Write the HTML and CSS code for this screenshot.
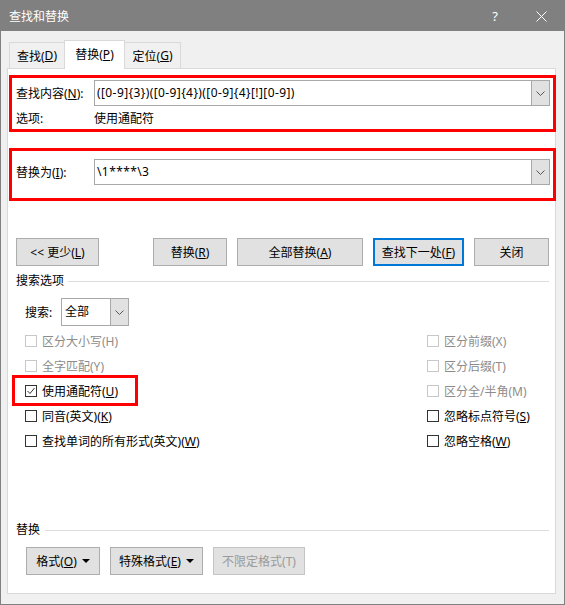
FILE: index.html
```html
<!DOCTYPE html>
<html lang="zh-CN">
<head>
    <meta charset="UTF-8">
    <title>查找和替换</title>
    <link rel="stylesheet" href="styles.css">
</head>
<body>
<div class="dialog">
    <div class="titlebar">
        <span class="title">查找和替换</span>
        <span class="title-btn help">?</span>
        <span class="title-btn">
            <svg width="11" height="11" viewBox="0 0 11 11"><path d="M0.5 0.5 L10.5 10.5 M10.5 0.5 L0.5 10.5" stroke="#fff" stroke-width="1" fill="none"/></svg>
        </span>
    </div>

    <div class="tabs">
        <div class="tab tab-find">查找(<u>D</u>)</div>
        <div class="tab tab-replace active">替换(<u>P</u>)</div>
        <div class="tab tab-goto">定位(<u>G</u>)</div>
    </div>

    <div class="panel">
        <div class="mark find-group">
            <div class="field-row">
                <span class="field-label">查找内容(<u>N</u>):</span>
                <div class="combo">
                    <span class="combo-text">([0-9]{3})([0-9]{4})([0-9]{4}[!][0-9])</span>
                    <span class="combo-btn">
                        <svg width="9" height="5" viewBox="0 0 9 5"><polyline points="0.5,0.5 4.5,4.5 8.5,0.5" stroke="#555" fill="none"/></svg>
                    </span>
                </div>
            </div>
            <div class="options-row">
                <span class="field-label">选项:</span>
                <span>使用通配符</span>
            </div>
        </div>

        <div class="mark replace-group">
            <div class="field-row">
                <span class="field-label">替换为(<u>I</u>):</span>
                <div class="combo">
                    <span class="combo-text">\1****\3</span>
                    <span class="combo-btn">
                        <svg width="9" height="5" viewBox="0 0 9 5"><polyline points="0.5,0.5 4.5,4.5 8.5,0.5" stroke="#555" fill="none"/></svg>
                    </span>
                </div>
            </div>
        </div>

        <div class="action-row">
            <button class="btn btn-more"><span>&lt;&lt; 更少(<u>L</u>)</span></button>
            <button class="btn btn-replace"><span>替换(<u>R</u>)</span></button>
            <button class="btn btn-all"><span>全部替换(<u>A</u>)</span></button>
            <button class="btn btn-next btn-default"><span>查找下一处(<u>F</u>)</span></button>
            <button class="btn btn-close"><span>关闭</span></button>
        </div>

        <div class="section-head">
            <span>搜索选项</span>
            <span class="rule"></span>
        </div>

        <div class="search-row">
            <span class="search-label">搜索:</span>
            <div class="select">
                <span class="select-text">全部</span>
                <span class="select-btn">
                    <svg width="9" height="5" viewBox="0 0 9 5"><polyline points="0.5,0.5 4.5,4.5 8.5,0.5" stroke="#555" fill="none"/></svg>
                </span>
            </div>
        </div>

        <div class="checks">
            <div class="check disabled"><span class="box"></span><span>区分大小写(H)</span></div>
            <div class="check disabled"><span class="box"></span><span>区分前缀(X)</span></div>

            <div class="check disabled"><span class="box"></span><span>全字匹配(Y)</span></div>
            <div class="check disabled"><span class="box"></span><span>区分后缀(T)</span></div>

            <div class="check marked">
                <span class="box">
                    <svg width="10" height="10" viewBox="0 0 10 10"><polyline points="1.5,5 4,7.5 8.5,2" stroke="#333" fill="none"/></svg>
                </span>
                <span>使用通配符(<u>U</u>)</span>
                <span class="mark-box"></span>
            </div>
            <div class="check disabled"><span class="box"></span><span>区分全/半角(M)</span></div>

            <div class="check"><span class="box"></span><span>同音(英文)(<u>K</u>)</span></div>
            <div class="check"><span class="box"></span><span>忽略标点符号(<u>S</u>)</span></div>

            <div class="check"><span class="box"></span><span>查找单词的所有形式(英文)(<u>W</u>)</span></div>
            <div class="check"><span class="box"></span><span>忽略空格(<u>W</u>)</span></div>
        </div>

        <div class="replace-section">
            <div class="section-head">
                <span>替换</span>
                <span class="rule"></span>
            </div>
            <div class="format-row">
                <button class="btn btn-format"><span>格式(<u>O</u>)</span><span class="caret"></span></button>
                <button class="btn btn-special"><span>特殊格式(<u>E</u>)</span><span class="caret"></span></button>
                <button class="btn btn-noformat" disabled><span>不限定格式(T)</span></button>
            </div>
        </div>
    </div>
</div>
</body>
</html>
```

FILE: styles.css
```css
body {
    margin: 0;
    font-family: "Noto Sans", "Noto Sans CJK SC", sans-serif;
    font-size: 12px;
    color: #000;
}
.dialog {
    width: 565px;
    height: 605px;
    box-sizing: border-box;
    border: 1px solid #808080;
    background: #f0f0f0;
    display: flex;
    flex-direction: column;
}
.titlebar {
    height: 30px;
    flex-shrink: 0;
    background: #808080;
    color: #fff;
    display: flex;
    align-items: center;
    padding-left: 8px;
}
.title {
    flex: 1;
}
.title-btn {
    width: 46px;
    height: 30px;
    display: flex;
    align-items: center;
    justify-content: center;
}
.help {
    font-size: 13px;
}

/* tabs */
.tabs {
    display: flex;
    align-items: flex-end;
    height: 28px;
    flex-shrink: 0;
    margin-top: 9px;
    padding-left: 8px;
}
.tab {
    height: 26px;
    box-sizing: border-box;
    border: 1px solid #d9d9d9;
    border-bottom: none;
    display: flex;
    align-items: center;
    justify-content: center;
}
.tab + .tab {
    margin-left: -1px;
}
.tab-find {
    width: 56px;
}
.tab-replace {
    width: 61px;
}
.tab-goto {
    width: 57px;
}
.tab.active {
    height: 29px;
    padding-bottom: 2px;
    margin-bottom: -1px;
    background: #fff;
    position: relative;
    z-index: 1;
}

.panel {
    margin-left: 6px;
    width: 549px;
    height: 526px;
    box-sizing: border-box;
    border: 1px solid #d9d9d9;
    background: #fff;
    display: flex;
    flex-direction: column;
}

/* red annotation boxes */
.mark {
    border: 3px solid #ff0000;
    box-sizing: border-box;
    width: 547px;
    margin-left: 1px;
    padding: 0 3px 0 4px;
}
.find-group {
    margin-top: 6px;
    height: 57px;
    padding-top: 2px;
}
.replace-group {
    margin-top: 16px;
    height: 53px;
    padding-top: 8px;
}
.field-row {
    display: flex;
    align-items: center;
}
.field-label {
    width: 78px;
    flex-shrink: 0;
}
.options-row {
    display: flex;
    margin-top: 2px;
    line-height: 21px;
}
.combo {
    flex: 1;
    height: 26px;
    box-sizing: border-box;
    border: 1px solid #a8a8a8;
    display: flex;
}
.combo-text {
    flex: 1;
    padding-left: 2px;
    line-height: 24px;
    letter-spacing: 0.4px;
    white-space: nowrap;
    overflow: hidden;
}
.combo-btn,
.select-btn {
    width: 17px;
    background: #e1e1e1;
    border-left: 1px solid #a8a8a8;
    display: flex;
    align-items: center;
    justify-content: center;
}

/* buttons */
.btn {
    height: 28px;
    box-sizing: border-box;
    border: 1px solid #adadad;
    background: #e1e1e1;
    font: inherit;
    color: inherit;
    padding: 0;
    display: flex;
    align-items: center;
    justify-content: center;
}
.btn-default {
    border: 2px solid #0078d7;
}
.btn:disabled {
    color: #9a9a9a;
    border-color: #c4c4c4;
}
.action-row {
    display: flex;
    gap: 10px;
    margin-top: 37px;
    padding-left: 8px;
}
.btn-more {
    width: 83px;
    margin-right: 44px;
}
.btn-replace {
    width: 74px;
}
.btn-all {
    width: 126px;
}
.btn-next {
    width: 91px;
}
.btn-close {
    width: 75px;
}

.section-head {
    display: flex;
    align-items: center;
    gap: 4px;
    line-height: 16px;
    padding: 0 6px 0 8px;
}
.action-row + .section-head {
    margin-top: 7px;
}
.rule {
    flex: 1;
    height: 1px;
    background: #dcdcdc;
}

.search-row {
    display: flex;
    align-items: center;
    margin-top: 9px;
    padding-left: 17px;
}
.search-label {
    width: 36px;
}
.select {
    width: 68px;
    height: 28px;
    box-sizing: border-box;
    border: 1px solid #a8a8a8;
    display: flex;
}
.select-text {
    flex: 1;
    padding-left: 3px;
    line-height: 26px;
}

/* checkboxes */
.checks {
    display: grid;
    grid-template-columns: 402px 1fr;
    grid-auto-rows: 25px;
    margin-top: 2px;
    padding-left: 17px;
}
.check {
    display: flex;
    align-items: center;
    gap: 5px;
}
.box {
    width: 12px;
    height: 12px;
    box-sizing: border-box;
    border: 1px solid #333;
    background: #fff;
    display: flex;
    align-items: center;
    justify-content: center;
}
.check.disabled {
    color: #8c8c8c;
}
.check.disabled .box {
    border-color: #c8c8c8;
}
.check.marked {
    position: relative;
}
.mark-box {
    position: absolute;
    left: -13px;
    top: -3px;
    width: 126px;
    height: 31px;
    box-sizing: border-box;
    border: 3px solid #ff0000;
}

.replace-section {
    margin-top: auto;
    padding-bottom: 18px;
}
.replace-section .section-head {
    gap: 5px;
}
.format-row {
    display: flex;
    gap: 10px;
    margin-top: 9px;
    padding-left: 18px;
}
.btn-format {
    width: 74px;
}
.btn-special {
    width: 93px;
}
.btn-noformat {
    width: 92px;
}
.caret {
    margin-left: 5px;
    border-left: 4px solid transparent;
    border-right: 4px solid transparent;
    border-top: 4px solid #000;
}
```
